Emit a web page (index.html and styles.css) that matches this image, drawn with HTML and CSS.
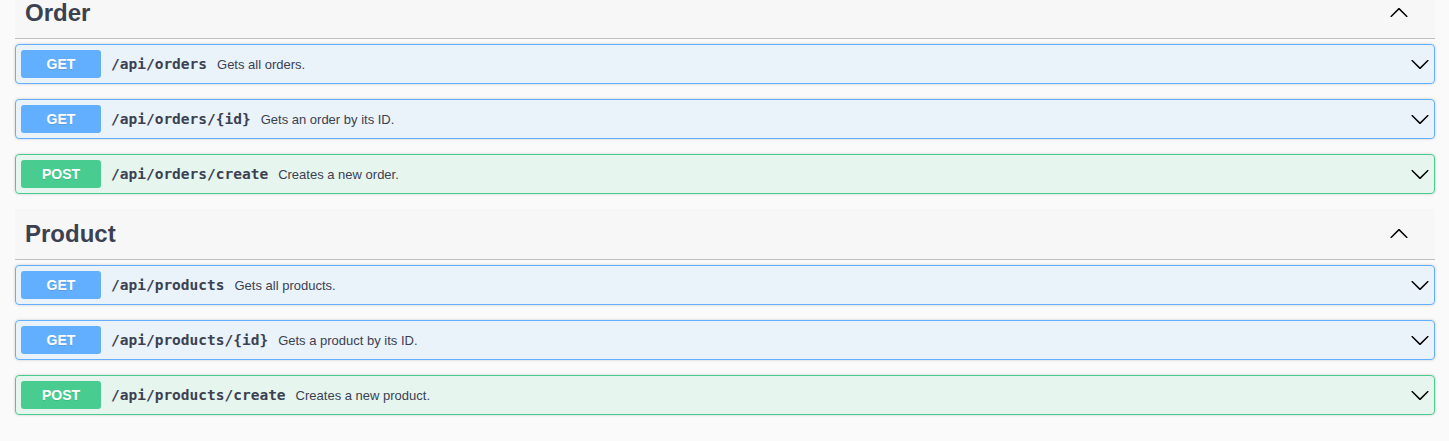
FILE: index.html
```html
<!DOCTYPE html>
<html lang="en">
<head>
<meta charset="utf-8">
<title>API</title>
<link rel="stylesheet" href="styles.css">
</head>
<body>
<div class="wrapper">
  <section class="tag-section">
    <h3 class="tag">
      <span class="tag-name">Order</span>
      <svg class="tag-arrow" viewBox="0 0 20 20" width="20" height="20"><path d="M17.418 13.891c.272.268.709.268.979 0s.271-.701 0-.969l-7.908-7.83c-.27-.268-.707-.268-.979 0l-7.908 7.83c-.27.268-.27.701 0 .969.271.268.709.268.979 0L10 6.75l7.418 7.141z"/></svg>
    </h3>
    <div class="opblock get">
      <div class="summary">
        <span class="method">GET</span>
        <span class="path">/api/orders</span>
        <span class="desc">Gets all orders.</span>
        <svg class="arrow" viewBox="0 0 20 20" width="20" height="20"><path d="M17.418 6.109c.272-.268.709-.268.979 0s.271.701 0 .969l-7.908 7.83c-.27.268-.707.268-.979 0l-7.908-7.830c-.27-.268-.27-.701 0-.969.271-.268.709-.268.979 0L10 13.25l7.418-7.141z"/></svg>
      </div>
    </div>
    <div class="opblock get">
      <div class="summary">
        <span class="method">GET</span>
        <span class="path">/api/orders/{id}</span>
        <span class="desc">Gets an order by its ID.</span>
        <svg class="arrow" viewBox="0 0 20 20" width="20" height="20"><path d="M17.418 6.109c.272-.268.709-.268.979 0s.271.701 0 .969l-7.908 7.83c-.27.268-.707.268-.979 0l-7.908-7.83c-.27-.268-.27-.701 0-.969.271-.268.709-.268.979 0L10 13.25l7.418-7.141z"/></svg>
      </div>
    </div>
    <div class="opblock post">
      <div class="summary">
        <span class="method">POST</span>
        <span class="path">/api/orders/create</span>
        <span class="desc">Creates a new order.</span>
        <svg class="arrow" viewBox="0 0 20 20" width="20" height="20"><path d="M17.418 6.109c.272-.268.709-.268.979 0s.271.701 0 .969l-7.908 7.83c-.27.268-.707.268-.979 0l-7.908-7.83c-.27-.268-.27-.701 0-.969.271-.268.709-.268.979 0L10 13.25l7.418-7.141z"/></svg>
      </div>
    </div>
  </section>
  <section class="tag-section">
    <h3 class="tag">
      <span class="tag-name">Product</span>
      <svg class="tag-arrow" viewBox="0 0 20 20" width="20" height="20"><path d="M17.418 13.891c.272.268.709.268.979 0s.271-.701 0-.969l-7.908-7.83c-.27-.268-.707-.268-.979 0l-7.908 7.83c-.27.268-.27.701 0 .969.271.268.709.268.979 0L10 6.75l7.418 7.141z"/></svg>
    </h3>
    <div class="opblock get">
      <div class="summary">
        <span class="method">GET</span>
        <span class="path">/api/products</span>
        <span class="desc">Gets all products.</span>
        <svg class="arrow" viewBox="0 0 20 20" width="20" height="20"><path d="M17.418 6.109c.272-.268.709-.268.979 0s.271.701 0 .969l-7.908 7.83c-.27.268-.707.268-.979 0l-7.908-7.83c-.27-.268-.27-.701 0-.969.271-.268.709-.268.979 0L10 13.25l7.418-7.141z"/></svg>
      </div>
    </div>
    <div class="opblock get">
      <div class="summary">
        <span class="method">GET</span>
        <span class="path">/api/products/{id}</span>
        <span class="desc">Gets a product by its ID.</span>
        <svg class="arrow" viewBox="0 0 20 20" width="20" height="20"><path d="M17.418 6.109c.272-.268.709-.268.979 0s.271.701 0 .969l-7.908 7.83c-.27.268-.707.268-.979 0l-7.908-7.83c-.27-.268-.27-.701 0-.969.271-.268.709-.268.979 0L10 13.25l7.418-7.141z"/></svg>
      </div>
    </div>
    <div class="opblock post">
      <div class="summary">
        <span class="method">POST</span>
        <span class="path">/api/products/create</span>
        <span class="desc">Creates a new product.</span>
        <svg class="arrow" viewBox="0 0 20 20" width="20" height="20"><path d="M17.418 6.109c.272-.268.709-.268.979 0s.271.701 0 .969l-7.908 7.83c-.27.268-.707.268-.979 0l-7.908-7.83c-.27-.268-.27-.701 0-.969.271-.268.709-.268.979 0L10 13.25l7.418-7.141z"/></svg>
      </div>
    </div>
  </section>
</div>
</body>
</html>
```

FILE: styles.css
```css
* {
  box-sizing: border-box;
}

html, body {
  margin: 0;
  padding: 0;
  background: #fafafa;
  font-family: "Liberation Sans", Arial, sans-serif;
  color: #3b4151;
}

.wrapper {
  padding: 0 14px 0 15px;
  margin-top: -12px;
}

.tag-section {
  display: flex;
  flex-direction: column;
}

.tag {
  display: flex;
  align-items: center;
  margin: 0 0 5px;
  padding: 10px 26px 10px 10px;
  font-size: 24px;
  line-height: 30px;
  font-weight: 700;
  color: #3b4151;
  background: rgba(0, 0, 0, 0.012);
  border-bottom: 1px solid rgba(59, 65, 81, 0.3);
}

.tag-name {
  flex: 1;
}

.tag-arrow {
  display: block;
  fill: #000;
  margin-top: -1px;
}

.opblock {
  margin: 0 0 15px;
  border: 1px solid #000;
  border-radius: 4px;
  box-shadow: 0 0 3px rgba(0, 0, 0, 0.19);
}

.opblock.get {
  background: rgba(97, 175, 254, 0.1);
  border-color: #61affe;
}

.opblock.post {
  background: rgba(73, 204, 144, 0.1);
  border-color: #49cc90;
}

.summary {
  display: flex;
  align-items: center;
  padding: 5px 4px 5px 5px;
}

.method {
  display: block;
  min-width: 80px;
  padding: 6px 0;
  line-height: 16px;
  font-size: 14px;
  font-weight: 700;
  text-align: center;
  color: #fff;
  border-radius: 3px;
  text-shadow: 0 1px 0 rgba(0, 0, 0, 0.1);
}

.get .method {
  background: #61affe;
}

.post .method {
  background: #49cc90;
}

.path {
  padding: 0 10px;
  font-family: "DejaVu Sans Mono", "Liberation Mono", monospace;
  font-size: 14.5px;
  font-weight: 700;
  color: #3b4151;
}

.desc {
  flex: 1;
  font-size: 13px;
  color: #3b4151;
}

.arrow {
  display: block;
  fill: #000;
}
```
